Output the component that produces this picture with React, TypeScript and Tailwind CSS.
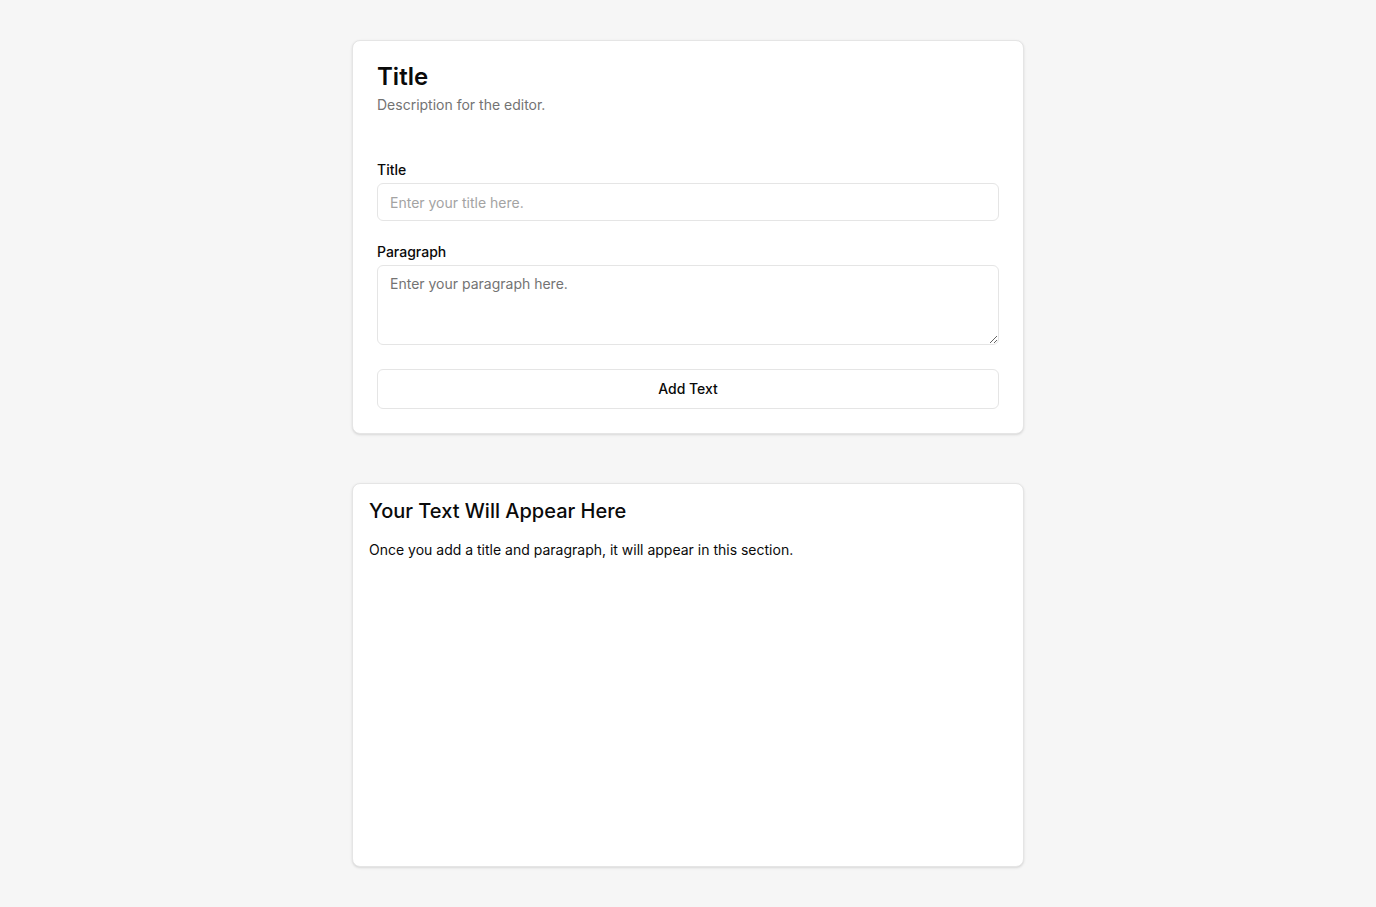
export default function App() {
  return (
    <div
      className="min-h-screen bg-[#f6f6f6] pt-10 pb-10"
      style={{ fontFamily: 'Inter, "Noto Sans", sans-serif' }}
    >
      <div className="mx-auto w-[672px] flex flex-col gap-[49px]">
        <div className="rounded-lg border border-[#e5e5e5] bg-white shadow-sm">
          <div className="flex flex-col gap-1.5 p-6">
            <h1 className="text-2xl font-semibold leading-none text-[#0a0a0a]">Title</h1>
            <p className="text-sm text-[#737373]">Description for the editor.</p>
          </div>
          <div className="px-6 pb-6 pt-6 flex flex-col">
            <label className="text-sm font-medium leading-none text-[#0a0a0a]">Title</label>
            <input
              type="text"
              placeholder="Enter your title here."
              className="mt-[6px] h-[38px] w-full rounded-md border border-[#e5e5e5] bg-white px-3 text-sm text-[#0a0a0a] placeholder:text-[#a3a3a3] outline-none"
            />
            <label className="mt-[24px] text-sm font-medium leading-none text-[#0a0a0a]">Paragraph</label>
            <textarea
              placeholder="Enter your paragraph here."
              className="mt-[6px] h-[80px] w-full rounded-md border border-[#e5e5e5] bg-white px-3 py-2 text-sm text-[#0a0a0a] placeholder:text-[#737373] outline-none"
            />
            <button className="mt-6 h-10 w-full rounded-md border border-[#e5e5e5] bg-white text-sm font-medium text-[#0a0a0a]">
              Add Text
            </button>
          </div>
        </div>

        <div className="h-[384px] rounded-lg border border-[#e5e5e5] bg-white px-4 pb-4 pt-[13px] shadow-sm">
          <h2 className="text-xl font-medium text-[#0a0a0a]">Your Text Will Appear Here</h2>
          <p className="mt-[15px] text-sm text-[#0a0a0a]">
            Once you add a title and paragraph, it will appear in this section.
          </p>
        </div>
      </div>
    </div>
  );
}
